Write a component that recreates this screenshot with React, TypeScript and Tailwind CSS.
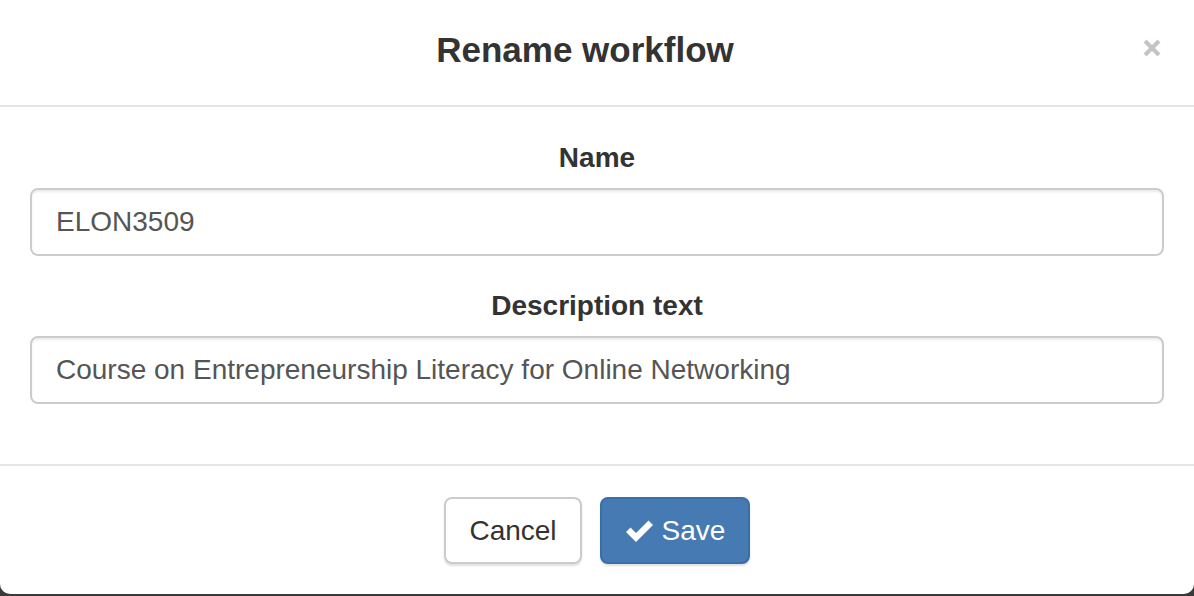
import React from "react";

export default function App() {
  return (
    <div
      className="w-[1194px] h-[596px] bg-[#3a3a3a] overflow-hidden"
      style={{ fontFamily: '"Liberation Sans", Arial, sans-serif' }}
    >
      <div className="w-[1194px] h-[594px] bg-white rounded-b-[10px] flex flex-col">
        {/* Header */}
        <div className="relative h-[107px] shrink-0 border-b-2 border-[#e5e5e5] flex items-center justify-center">
          <h4 className="text-[35px] font-bold text-[#333333] leading-none -mt-[6px] mr-[24px]">
            Rename workflow
          </h4>
          <button className="absolute right-[30px] top-[36px] w-[24px] h-[24px] flex items-center justify-center">
            <svg width="20" height="20" viewBox="0 0 20 20">
              <path
                d="M3 3 L17 17 M17 3 L3 17"
                stroke="#c4c4c4"
                strokeWidth="4.2"
                strokeLinecap="butt"
              />
            </svg>
          </button>
        </div>

        {/* Body */}
        <div className="px-[30px] pt-[31px] h-[359px] shrink-0 border-b-2 border-[#e5e5e5]">
          <div className="mb-[30px]">
            <label className="block text-center text-[28px] font-bold text-[#333333] leading-[40px] mb-[10px]">
              Name
            </label>
            <div className="h-[68px] rounded-[8px] border-2 border-[#cccccc] shadow-[inset_0_2px_2px_rgba(0,0,0,0.075)] flex items-center px-[24px] text-[28px] text-[#555555]">
              ELON3509
            </div>
          </div>
          <div>
            <label className="block text-center text-[28px] font-bold text-[#333333] leading-[40px] mb-[10px]">
              Description text
            </label>
            <div className="h-[68px] rounded-[8px] border-2 border-[#cccccc] shadow-[inset_0_2px_2px_rgba(0,0,0,0.075)] flex items-center px-[24px] text-[28px] text-[#555555]">
              Course on Entrepreneurship Literacy for Online Networking
            </div>
          </div>
        </div>

        {/* Footer */}
        <div className="flex-1 flex items-start justify-center gap-[18px] pt-[31px]">
          <button className="w-[138px] h-[67px] rounded-[8px] border-2 border-[#cccccc] bg-white text-[28px] text-[#333333] shadow-[0_2px_2px_rgba(0,0,0,0.12)] flex items-center justify-center">
            Cancel
          </button>
          <button className="w-[150px] h-[67px] rounded-[8px] border-2 border-[#3a6ea8] bg-[#457ab3] text-[28px] text-white shadow-[0_2px_2px_rgba(0,0,0,0.12)] flex items-center justify-center gap-[8px]">
            <svg width="29" height="24" viewBox="0 0 29 24">
              <path
                d="M1 13 L5.5 8.5 L11 14 L23.5 1.5 L28 6 L11 23 Z"
                fill="white"
              />
            </svg>
            <span>Save</span>
          </button>
        </div>
      </div>
    </div>
  );
}
